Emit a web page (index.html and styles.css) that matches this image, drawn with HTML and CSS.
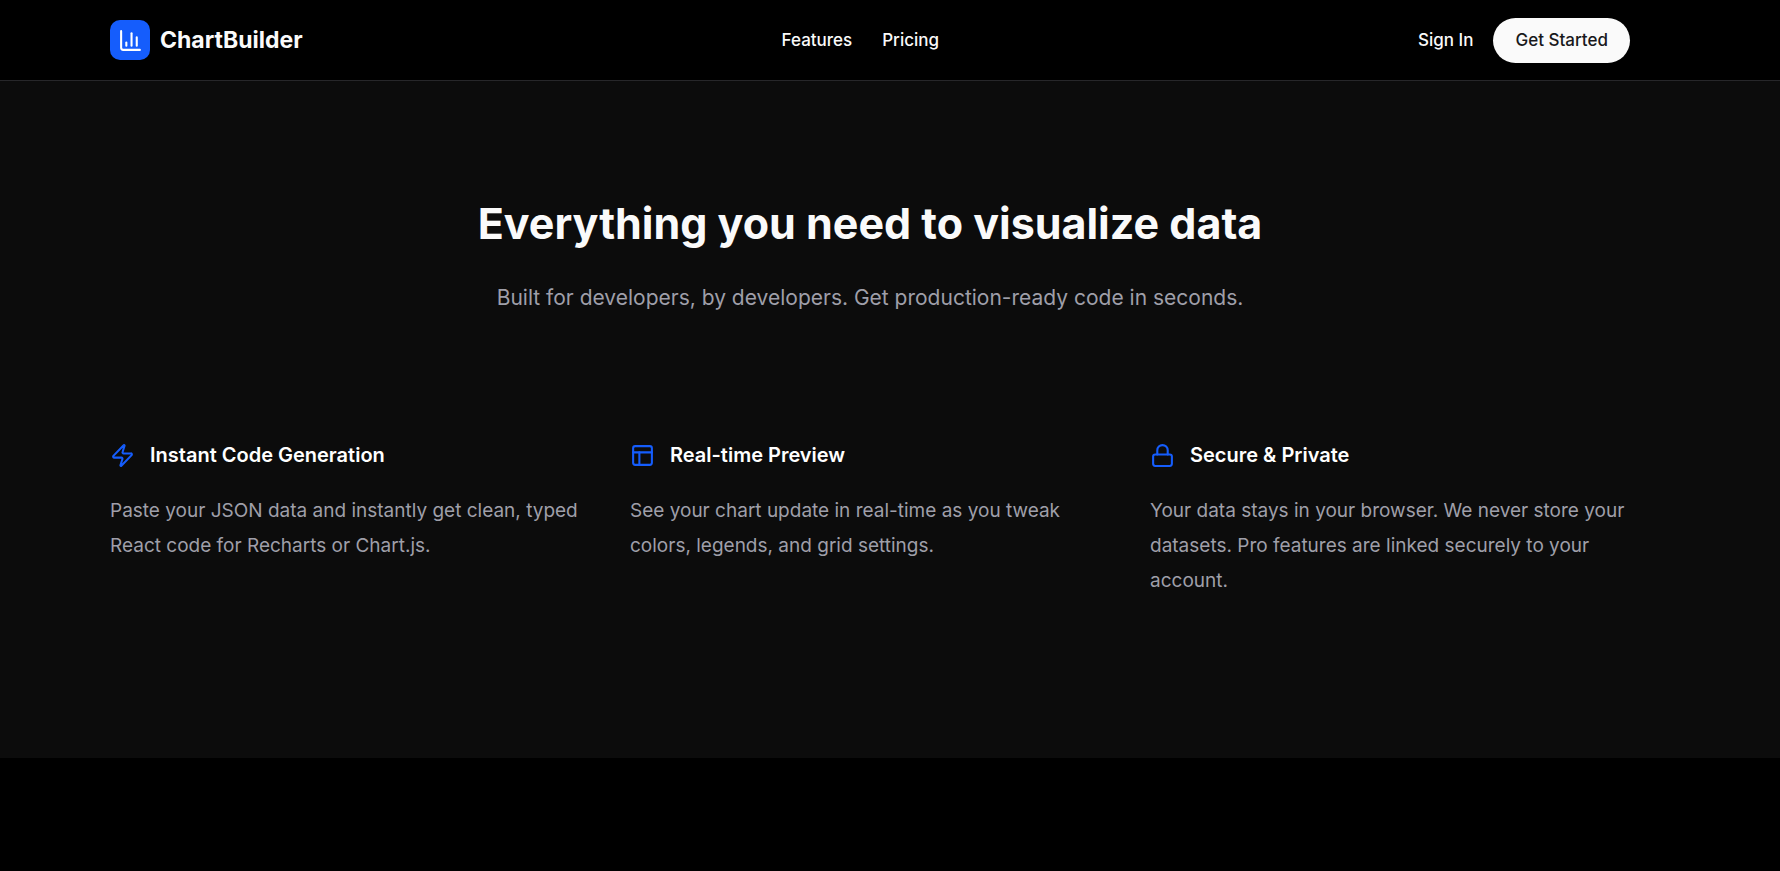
FILE: index.html
```html
<!DOCTYPE html>
<html lang="en">
<head>
    <meta charset="UTF-8">
    <meta name="viewport" content="width=device-width, initial-scale=1.0">
    <title>ChartBuilder</title>
    <link rel="stylesheet" href="styles.css">
</head>
<body>
    <header class="header">
        <div class="container navbar">
            <a class="logo" href="#">
                <span class="logo-icon">
                    <svg class="icon" viewBox="0 0 24 24" aria-hidden="true">
                        <path d="M3 3v16a2 2 0 0 0 2 2h16"/>
                        <path d="M18 17V9"/>
                        <path d="M13 17V5"/>
                        <path d="M8 17v-3"/>
                    </svg>
                </span>
                ChartBuilder
            </a>
            <nav class="nav-links">
                <a href="#features">Features</a>
                <a href="#pricing">Pricing</a>
            </nav>
            <div class="actions">
                <a href="#signin">Sign In</a>
                <button class="btn" type="button">Get Started</button>
            </div>
        </div>
    </header>

    <main>
        <section class="features" id="features">
            <div class="container">
                <div class="intro">
                    <h2>Everything you need to visualize data</h2>
                    <p>Built for developers, by developers. Get production-ready code in seconds.</p>
                </div>
                <div class="feature-grid">
                    <div class="feature">
                        <h3>
                            <svg class="icon" viewBox="0 0 24 24" aria-hidden="true">
                                <path d="M4 14a1 1 0 0 1-.78-1.63l9.9-10.2a.5.5 0 0 1 .86.46l-1.92 6.02A1 1 0 0 0 13 10h7a1 1 0 0 1 .78 1.63l-9.9 10.2a.5.5 0 0 1-.86-.46l1.92-6.02A1 1 0 0 0 11 14z"/>
                            </svg>
                            Instant Code Generation
                        </h3>
                        <p>Paste your JSON data and instantly get clean, typed React code for Recharts or Chart.js.</p>
                    </div>
                    <div class="feature">
                        <h3>
                            <svg class="icon" viewBox="0 0 24 24" aria-hidden="true">
                                <rect width="18" height="18" x="3" y="3" rx="2"/>
                                <path d="M3 9h18"/>
                                <path d="M9 21V9"/>
                            </svg>
                            Real-time Preview
                        </h3>
                        <p>See your chart update in real-time as you tweak colors, legends, and grid settings.</p>
                    </div>
                    <div class="feature">
                        <h3>
                            <svg class="icon" viewBox="0 0 24 24" aria-hidden="true">
                                <rect width="18" height="11" x="3" y="11" rx="2"/>
                                <path d="M7 11V7a5 5 0 0 1 10 0v4"/>
                            </svg>
                            Secure &amp; Private
                        </h3>
                        <p>Your data stays in your browser. We never store your datasets. Pro features are linked securely to your account.</p>
                    </div>
                </div>
            </div>
        </section>
    </main>
</body>
</html>
```
FILE: styles.css
```css
* {
    box-sizing: border-box;
    margin: 0;
    padding: 0;
}
body {
    font-family: Inter, "Liberation Sans", sans-serif;
    font-size: 19px;
    background-color: #000;
    color: #fafafa;
}
a {
    color: inherit;
    text-decoration: none;
}
.container {
    padding: 0 150px 0 110px;
}
.icon {
    width: 25px;
    height: 25px;
    flex-shrink: 0;
    fill: none;
    stroke: currentColor;
    stroke-width: 2;
    stroke-linecap: round;
    stroke-linejoin: round;
}

/* Header */
.header {
    border-bottom: 1px solid #27272a;
}
.navbar {
    display: flex;
    justify-content: space-between;
    align-items: center;
    height: 80px;
    font-size: 17px;
    font-weight: 500;
}
.logo {
    display: flex;
    align-items: center;
    gap: 10px;
    font-size: 23px;
    font-weight: 700;
}
.logo-icon {
    display: flex;
    align-items: center;
    justify-content: center;
    width: 40px;
    height: 40px;
    border-radius: 10px;
    background-color: #155dfc;
    color: #fff;
}
.nav-links {
    display: flex;
    gap: 30px;
}
.actions {
    display: flex;
    align-items: center;
    gap: 20px;
}
.btn {
    height: 45px;
    padding: 0 22px;
    border: none;
    border-radius: 23px;
    background-color: #fafafa;
    color: #18181b;
    font: inherit;
    cursor: pointer;
}

/* Features */
.features {
    padding: 117px 0 160px;
    background-color: #0c0c0c;
}
.intro {
    margin-bottom: 120px;
    text-align: center;
}
.intro h2 {
    margin-bottom: 30px;
    font-size: 43px;
    font-weight: 700;
    line-height: 50px;
}
.intro p {
    font-size: 21px;
    line-height: 40px;
    color: #9f9fa9;
}
.feature-grid {
    display: grid;
    grid-template-columns: repeat(3, 1fr);
    gap: 40px;
}
.feature h3 {
    display: flex;
    align-items: center;
    gap: 15px;
    margin-bottom: 20px;
    font-size: 20px;
    font-weight: 600;
    line-height: 35px;
    color: #fff;
}
.feature h3 .icon {
    color: #155dfc;
}
.feature p {
    line-height: 35px;
    color: #9f9fa9;
}
```
